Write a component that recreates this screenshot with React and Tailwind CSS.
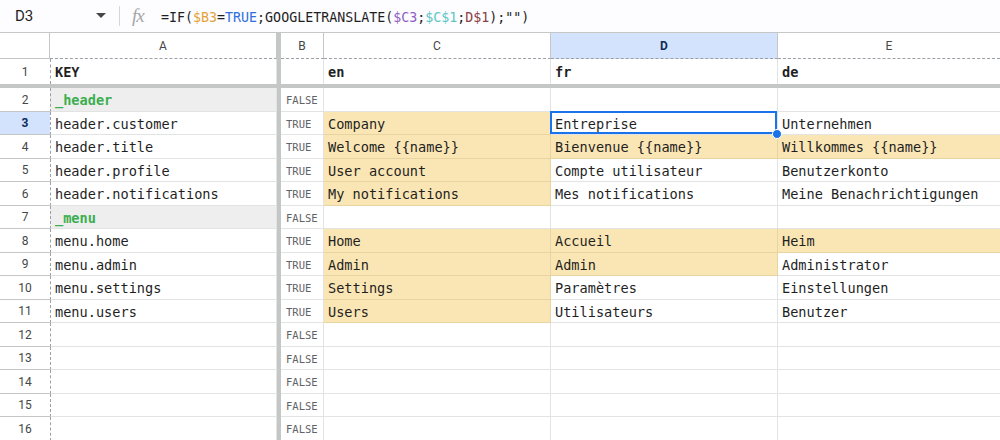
import React from "react";

const MONO = "font-['DejaVu_Sans_Mono','Liberation_Mono',monospace]";
const SANS = "font-['Roboto','Liberation_Sans',sans-serif]";

/* rows 2..16 — a: key, b: flag, c/d/e: text + highlight */
const rows = [
  { n: 2, a: "_header", group: true, b: "FALSE" },
  { n: 3, a: "header.customer", b: "TRUE", c: ["Company", 1], d: ["Entreprise", 0], e: ["Unternehmen", 0], sel: true },
  { n: 4, a: "header.title", b: "TRUE", c: ["Welcome {{name}}", 1], d: ["Bienvenue {{name}}", 1], e: ["Willkommes {{name}}", 1] },
  { n: 5, a: "header.profile", b: "TRUE", c: ["User account", 1], d: ["Compte utilisateur", 0], e: ["Benutzerkonto", 0] },
  { n: 6, a: "header.notifications", b: "TRUE", c: ["My notifications", 1], d: ["Mes notifications", 0], e: ["Meine Benachrichtigungen", 0] },
  { n: 7, a: "_menu", group: true, b: "FALSE" },
  { n: 8, a: "menu.home", b: "TRUE", c: ["Home", 1], d: ["Accueil", 1], e: ["Heim", 1] },
  { n: 9, a: "menu.admin", b: "TRUE", c: ["Admin", 1], d: ["Admin", 1], e: ["Administrator", 0] },
  { n: 10, a: "menu.settings", b: "TRUE", c: ["Settings", 1], d: ["Paramètres", 0], e: ["Einstellungen", 0] },
  { n: 11, a: "menu.users", b: "TRUE", c: ["Users", 1], d: ["Utilisateurs", 0], e: ["Benutzer", 0] },
  { n: 12, b: "FALSE" },
  { n: 13, b: "FALSE" },
  { n: 14, b: "FALSE" },
  { n: 15, b: "FALSE" },
  { n: 16, b: "FALSE" },
];

function Cell({ w, text, yellow, children, extra = "" }) {
  return (
    <div
      className={`${w} h-full shrink-0 flex items-center pl-[4px] pr-[5px] pt-[2px] border-r border-b whitespace-nowrap overflow-hidden text-[13.6px] text-[#1f1f1f] ${MONO} ${
        yellow ? "bg-[#fae6b4] border-[#e8d4a0]" : "bg-white border-[#e2e3e3]"
      } ${extra}`}
    >
      {text}
      {children}
    </div>
  );
}

function FrozenBar() {
  return <div className="w-[4px] h-full shrink-0 bg-[#c4c7c5]" />;
}

function Formula() {
  return (
    <span className={`text-[13.3px] text-[#1f1f1f] ${MONO}`}>
      {"=IF("}
      <span className="text-[#e3a33a]">$B3</span>
      {"="}
      <span className="text-[#2f6fde]">TRUE</span>
      {";GOOGLETRANSLATE("}
      <span className="text-[#8e5fc6]">$C3</span>
      {";"}
      <span className="text-[#5cc6c6]">$C$1</span>
      {";"}
      <span className="text-[#8a3f45]">D$1</span>
      {');"")'}
    </span>
  );
}

export default function App() {
  return (
    <div className="w-[1000px] h-[440px] overflow-hidden bg-white">
      {/* formula bar */}
      <div className="h-[33px] flex items-center border-b border-[#c7c7c7] bg-[#fdfcfe]">
        <div className={`w-[92px] pl-[15px] text-[15px] text-[#1f1f1f] ${SANS}`}>D3</div>
        <svg width="10" height="6" viewBox="0 0 10 6" className="ml-[4px]">
          <path d="M0 0h10L5 5z" fill="#444746" />
        </svg>
        <div className="ml-[13px] w-px h-[20px] bg-[#d5d7d6]" />
        <span className="ml-[12px] w-[28px] text-[19px] italic text-[#a4a6a8] font-['Liberation_Serif',serif] tracking-[-1px]">
          fx
        </span>
        <span className="ml-[1px]">
          <Formula />
        </span>
      </div>

      {/* column headers */}
      <div className={`h-[26px] flex text-[12px] text-[#444746] ${SANS}`}>
        <div className="w-[50px] shrink-0 border-r border-b border-[#c4c7c5]" />
        <div className="w-[227px] shrink-0 flex items-center justify-center border-r border-b border-[#c4c7c5] [border-bottom-style:dashed] [border-bottom-color:#9aa0a6]">
          A
        </div>
        <FrozenBar />
        <div className="w-[43px] shrink-0 flex items-center justify-center border-r border-b border-[#c4c7c5] [border-bottom-style:dashed] [border-bottom-color:#9aa0a6]">
          B
        </div>
        <div className="w-[227px] shrink-0 flex items-center justify-center border-r border-b border-[#c4c7c5] [border-bottom-style:dashed] [border-bottom-color:#9aa0a6]">
          C
        </div>
        <div className="w-[227px] shrink-0 flex items-center justify-center border-r border-b border-[#c4c7c5] bg-[#d3e3fd] font-bold text-[#0b2a5c] [border-bottom-style:dashed] [border-bottom-color:#9aa0a6]">
          D
        </div>
        <div className="w-[222px] shrink-0 flex items-center justify-center border-b border-[#c4c7c5] [border-bottom-style:dashed] [border-bottom-color:#9aa0a6]">
          E
        </div>
      </div>

      {/* row 1 */}
      <div className="h-[25px] flex">
        <div className={`w-[50px] shrink-0 flex items-center justify-center text-[12px] text-[#444746] ${SANS}`}>1</div>
        <Cell w="w-[227px]" text="KEY" extra="font-bold border-l border-l-[#9aa0a6] [border-left-style:dashed] border-b-0" />
        <FrozenBar />
        <Cell w="w-[43px]" extra="border-b-0" />
        <Cell w="w-[227px]" text="en" extra="font-bold border-b-0" />
        <Cell w="w-[227px]" text="fr" extra="font-bold border-b-0" />
        <Cell w="w-[222px]" text="de" extra="font-bold border-b-0 border-r-0" />
      </div>

      {/* frozen row divider */}
      <div className="h-[4px] bg-[#c4c7c5]" />

      {rows.map((r, i) => (
        <div key={r.n} className={`flex ${i % 2 === 0 ? "h-[24px]" : "h-[23px]"}`}>
          <div
            className={`w-[50px] shrink-0 flex items-center justify-center border-b border-[#c4c7c5] text-[12px] ${SANS} ${
              r.sel ? "bg-[#d3e3fd] font-bold text-[#0b2a5c]" : "text-[#444746]"
            }`}
          >
            {r.n}
          </div>
          <Cell
            w="w-[227px]"
            text={r.a}
            extra={`border-l border-l-[#9aa0a6] [border-left-style:dashed] ${
              r.group ? "!bg-[#eeeeee] !text-[#3cae4e] font-semibold" : ""
            }`}
          />
          <FrozenBar />
          <div
            className={`w-[43px] h-full shrink-0 flex items-center pl-[5px] pt-[3px] border-r border-b border-[#e2e3e3] text-[10.5px] text-[#5f6368] ${MONO}`}
          >
            {r.b}
          </div>
          <Cell w="w-[227px]" text={r.c?.[0]} yellow={r.c?.[1]} />
          <Cell w="w-[227px]" text={r.d?.[0]} yellow={r.d?.[1]} extra={r.sel ? "relative !overflow-visible" : ""}>
            {r.sel && (
              <>
                <div className="absolute -left-px -top-px right-0 bottom-0 border-2 border-[#1a73e8]" />
                <div className="absolute -right-[5px] -bottom-[5px] w-[10px] h-[10px] rounded-full bg-[#1a73e8] border border-white z-10" />
              </>
            )}
          </Cell>
          <Cell w="w-[222px]" text={r.e?.[0]} yellow={r.e?.[1]} extra="border-r-0" />
        </div>
      ))}
    </div>
  );
}
